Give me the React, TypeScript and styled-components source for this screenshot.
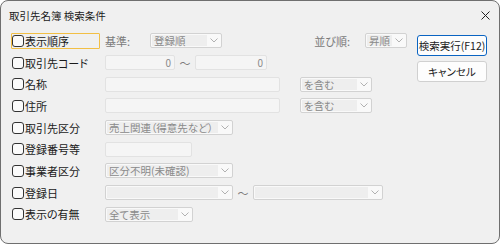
import React from 'react';
import styled, { createGlobalStyle } from 'styled-components';

const GlobalStyle = createGlobalStyle`
  html, body {
    margin: 0;
    padding: 0;
    background: #ffffff;
  }
  * {
    box-sizing: border-box;
  }
`;

const Window = styled.div`
  width: 500px;
  height: 244px;
  border: 1px solid #6f6f6f;
  border-radius: 8px;
  background: #f0f0f0;
  overflow: hidden;
  font-family: 'Noto Sans CJK JP', 'Noto Sans', sans-serif;
  font-feature-settings: 'palt';
  color: #1a1a1a;
`;

const TitleBar = styled.div`
  height: 28px;
  display: flex;
  align-items: center;
  justify-content: space-between;
  padding: 0 9px 0 8px;
  font-size: 10.5px;
`;

const Body = styled.div`
  display: flex;
  padding-top: 1px;
`;

const Form = styled.div`
  flex: 1;
  display: grid;
  grid-auto-rows: 21.7px;
  padding-left: 10px;
`;

const Row = styled.div`
  display: flex;
  align-items: center;
  font-size: 11px;
`;

const LabelCell = styled.div<{ $focused?: boolean }>`
  width: 89px;
  height: 16px;
  margin-right: 5px;
  display: flex;
  align-items: center;
  border: 1px solid ${(p) => (p.$focused ? '#f2bf45' : 'transparent')};
  border-radius: 1px;
`;

const Check = styled.span`
  width: 12px;
  height: 12px;
  border: 1px solid #333;
  border-radius: 3px;
  background: #fbfbfb;
  flex: none;
`;

const LabelText = styled.span`
  margin-left: 1px;
  white-space: nowrap;
  line-height: 14px;
`;

const Caption = styled.span<{ $w?: number; $gap?: number }>`
  color: #7a7a7a;
  width: ${(p) => (p.$w ? `${p.$w}px` : 'auto')};
  margin-right: ${(p) => p.$gap ?? 0}px;
  white-space: nowrap;
  line-height: 14px;
`;

const TextBox = styled.div<{ $w: number }>`
  width: ${(p) => p.$w}px;
  height: 15px;
  border: 1px solid #e2e2e2;
  border-radius: 2px;
  background: #f5f5f5;
  color: #8a8a8a;
  font-size: 10px;
  display: flex;
  align-items: center;
  justify-content: flex-end;
  padding-right: 3px;
  line-height: 13px;
`;

const Select = styled.div<{ $w: number }>`
  width: ${(p) => p.$w}px;
  height: 15px;
  border: 1px solid #d2d2d2;
  border-radius: 2px;
  background: #f9f9f9;
  display: flex;
  padding: 0 0 0 1px;
`;

const SelectValue = styled.span`
  flex: 1;
  margin: 1px 0;
  background: #eeeeee;
  color: #8a8a8a;
  padding-left: 2px;
  font-size: 10.5px;
  line-height: 11px;
  white-space: nowrap;
`;

const Arrow = styled.span`
  width: 14px;
  display: flex;
  align-items: center;
  justify-content: center;
`;

const Tilde = styled.span<{ $w: number }>`
  width: ${(p) => p.$w}px;
  text-align: center;
  color: #7a7a7a;
  font-size: 11px;
  line-height: 14px;
`;

const Spacer = styled.span`
  flex: 1;
`;

const Buttons = styled.div`
  width: 70px;
  margin: 0 12px 0 10px;
  padding-top: 5px;
  display: flex;
  flex-direction: column;
  gap: 5px;
`;

const Button = styled.div<{ $primary?: boolean }>`
  height: 21px;
  border: ${(p) => (p.$primary ? '1.5px solid #0a64c2' : '1px solid #d0d0d0')};
  border-radius: 3px;
  background: #fdfdfd;
  font-size: 10.5px;
  display: flex;
  align-items: center;
  justify-content: center;
  white-space: nowrap;
  line-height: 14px;
`;

const Chevron = () => (
  <svg width="8" height="5" viewBox="0 0 8 5">
    <path d="M0.5 0.5 L4 4 L7.5 0.5" fill="none" stroke="#a8a8a8" strokeWidth="0.9" />
  </svg>
);

const DropDown = ({ w, value }: { w: number; value: string }) => (
  <Select $w={w}>
    <SelectValue>{value}</SelectValue>
    <Arrow>
      <Chevron />
    </Arrow>
  </Select>
);

const Label = ({ text, focused }: { text: string; focused?: boolean }) => (
  <LabelCell $focused={focused}>
    <Check />
    <LabelText>{text}</LabelText>
  </LabelCell>
);

export default function App() {
  return (
    <>
      <GlobalStyle />
      <Window>
        <TitleBar>
          <span>取引先名簿 検索条件</span>
          <svg width="9" height="9" viewBox="0 0 9 9">
            <path d="M0.5 0.5 L8.5 8.5 M8.5 0.5 L0.5 8.5" stroke="#222" strokeWidth="1" />
          </svg>
        </TitleBar>
        <Body>
          <Form>
            <Row>
              <Label text="表示順序" focused />
              <Caption $w={45}>基準:</Caption>
              <DropDown w={72} value="登録順" />
              <Spacer />
              <Caption $gap={15}>並び順:</Caption>
              <DropDown w={42} value="昇順" />
            </Row>
            <Row>
              <Label text="取引先コード" />
              <TextBox $w={70}>0</TextBox>
              <Tilde $w={20}>〜</Tilde>
              <TextBox $w={72}>0</TextBox>
            </Row>
            <Row>
              <Label text="名称" />
              <TextBox $w={175} />
              <Tilde $w={20} />
              <DropDown w={72} value="を含む" />
            </Row>
            <Row>
              <Label text="住所" />
              <TextBox $w={175} />
              <Tilde $w={20} />
              <DropDown w={72} value="を含む" />
            </Row>
            <Row>
              <Label text="取引先区分" />
              <DropDown w={128} value="売上関連（得意先など）" />
            </Row>
            <Row>
              <Label text="登録番号等" />
              <TextBox $w={87} />
            </Row>
            <Row>
              <Label text="事業者区分" />
              <DropDown w={128} value="区分不明(未確認)" />
            </Row>
            <Row>
              <Label text="登録日" />
              <DropDown w={128} value="" />
              <Tilde $w={20}>〜</Tilde>
              <DropDown w={130} value="" />
            </Row>
            <Row>
              <Label text="表示の有無" />
              <DropDown w={88} value="全て表示" />
            </Row>
          </Form>
          <Buttons>
            <Button $primary>検索実行(F12)</Button>
            <Button>キャンセル</Button>
          </Buttons>
        </Body>
      </Window>
    </>
  );
}
